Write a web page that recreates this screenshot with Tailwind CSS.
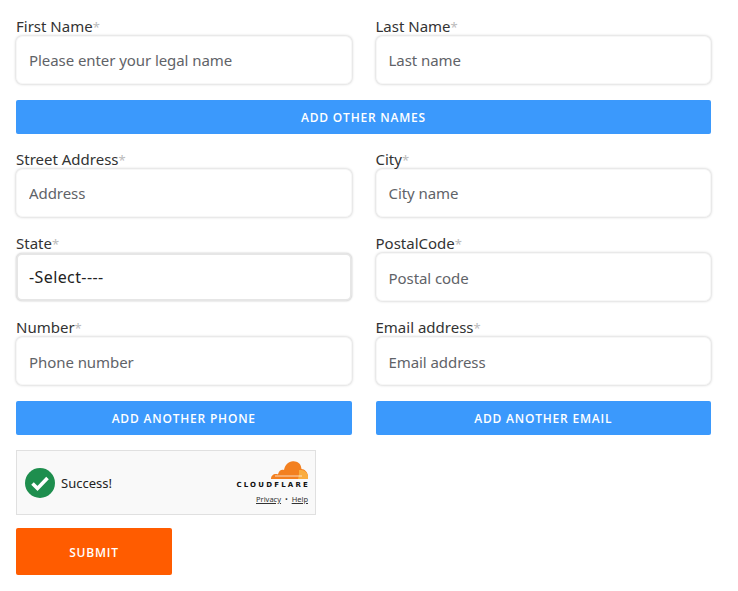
<!DOCTYPE html>
<html lang="en">
<head>
  <meta charset="UTF-8" />
  <meta name="viewport" content="width=device-width, initial-scale=1.0" />
  <title>Contact Form</title>
  <script src="https://cdn.jsdelivr.net/npm/@tailwindcss/browser@4"></script>
</head>
<body class="bg-white font-['Noto_Sans',sans-serif]">
  <form class="w-[738px] h-[591px] overflow-hidden pl-4 pr-[27px] pt-4">

    <!-- Names -->
    <div class="grid grid-cols-2 gap-x-6">
      <div>
        <label class="block h-5 text-[15px] leading-5 text-[#333]">First Name<span class="text-[#bbb] text-[13px]">*</span></label>
        <input placeholder="Please enter your legal name" class="w-full h-12 px-3 bg-white rounded-md border border-[#f7f7f7] shadow-[0_0_3px_rgba(0,0,0,0.25)] text-[15px] tracking-[-0.07px] text-[#333] placeholder:text-[#5f6368] outline-none" />
      </div>
      <div>
        <label class="block h-5 text-[15px] leading-5 text-[#333]">Last Name<span class="text-[#bbb] text-[13px]">*</span></label>
        <input placeholder="Last name" class="w-full h-12 px-3 bg-white rounded-md border border-[#f7f7f7] shadow-[0_0_3px_rgba(0,0,0,0.25)] text-[15px] tracking-[-0.07px] text-[#333] placeholder:text-[#5f6368] outline-none" />
      </div>
    </div>
    <button type="button" class="block w-full h-[34px] mt-4 pt-px bg-[#3b99fc] rounded-[2px] text-white text-xs font-semibold tracking-[0.8px] font-['Open_Sans',sans-serif]">ADD OTHER NAMES</button>

    <!-- Address -->
    <div class="grid grid-cols-2 gap-x-6 gap-y-4 mt-[15px]">
      <div>
        <label class="block h-5 text-[15px] leading-5 text-[#333]">Street Address<span class="text-[#bbb] text-[13px]">*</span></label>
        <input placeholder="Address" class="w-full h-12 px-3 bg-white rounded-md border border-[#f7f7f7] shadow-[0_0_3px_rgba(0,0,0,0.25)] text-[15px] tracking-[-0.07px] text-[#333] placeholder:text-[#5f6368] outline-none" />
      </div>
      <div>
        <label class="block h-5 text-[15px] leading-5 text-[#333]">City<span class="text-[#bbb] text-[13px]">*</span></label>
        <input placeholder="City name" class="w-full h-12 px-3 bg-white rounded-md border border-[#f7f7f7] shadow-[0_0_3px_rgba(0,0,0,0.25)] text-[15px] tracking-[-0.07px] text-[#333] placeholder:text-[#5f6368] outline-none" />
      </div>
      <div>
        <label class="block h-5 text-[15px] leading-5 text-[#333]">State<span class="text-[#bbb] text-[13px]">*</span></label>
        <div class="flex items-center w-full h-12 pl-[11px] bg-white rounded-md border-2 border-[#e6e6e6] shadow-[0_0_2px_rgba(0,0,0,0.25)] text-base tracking-[0.4px] text-[#222]">-Select----</div>
      </div>
      <div>
        <label class="block h-5 text-[15px] leading-5 text-[#333]">PostalCode<span class="text-[#bbb] text-[13px]">*</span></label>
        <input placeholder="Postal code" class="w-full h-12 px-3 pt-px bg-white rounded-md border border-[#f7f7f7] shadow-[0_0_3px_rgba(0,0,0,0.25)] text-[15px] tracking-[-0.07px] text-[#333] placeholder:text-[#5f6368] outline-none" />
      </div>
      <div>
        <label class="block h-5 text-[15px] leading-5 text-[#333]">Number<span class="text-[#bbb] text-[13px]">*</span></label>
        <input placeholder="Phone number" class="w-full h-12 px-3 pt-px bg-white rounded-md border border-[#f7f7f7] shadow-[0_0_3px_rgba(0,0,0,0.25)] text-[15px] tracking-[-0.07px] text-[#333] placeholder:text-[#5f6368] outline-none" />
      </div>
      <div>
        <label class="block h-5 text-[15px] leading-5 text-[#333]">Email address<span class="text-[#bbb] text-[13px]">*</span></label>
        <input placeholder="Email address" class="w-full h-12 px-3 pt-px bg-white rounded-md border border-[#f7f7f7] shadow-[0_0_3px_rgba(0,0,0,0.25)] text-[15px] tracking-[-0.07px] text-[#333] placeholder:text-[#5f6368] outline-none" />
      </div>
      <button type="button" class="h-[34px] pt-px bg-[#3b99fc] rounded-[2px] text-white text-xs font-semibold tracking-[0.8px] font-['Open_Sans',sans-serif]">ADD ANOTHER PHONE</button>
      <button type="button" class="h-[34px] pt-px bg-[#3b99fc] rounded-[2px] text-white text-xs font-semibold tracking-[0.8px] font-['Open_Sans',sans-serif]">ADD ANOTHER EMAIL</button>
    </div>

    <!-- Captcha widget -->
    <div class="flex items-center justify-between w-[300px] h-[65px] mt-[15px] pl-2 pr-[7px] bg-[#f9f9f9] border border-[#e0e0e0]">
      <div class="flex items-center gap-[6px]">
        <svg class="w-[30px] h-[30px]" viewBox="0 0 30 30">
          <circle cx="15" cy="15" r="15" fill="#1e8e4e"></circle>
          <path d="M7.5 15.500l5 5L22.500 10" fill="none" stroke="#fff" stroke-width="3.600"></path>
        </svg>
        <span class="pt-[2px] text-[13px] text-[#232323]">Success!</span>
      </div>
      <div class="flex flex-col items-end">
        <svg class="w-[37px] h-[18px]" viewBox="0 0 37 18">
          <path d="M0 18c0-3 2-5 5-5 1 0 2 .3 2 .3C8 9 11 8 13 9c1-6 6-10 11-8.500 4 .6 6 3 6.500 7.500 3 0 6.500 3 6.500 8v2z" fill="#f38020"></path>
          <path d="M27 18c1-3 1-6 1-9h2.500c3 0 6.500 3 6.500 7v2z" fill="#faad3f"></path>
          <path d="M4 15h27" stroke="#fff" stroke-width="0.7"></path>
        </svg>
        <span class="mt-[2px] text-[7px] leading-[8px] font-bold tracking-[2.2px] mr-[-2px] text-[#111] font-['DejaVu_Sans',sans-serif]">CLOUDFLARE</span>
        <span class="mt-[5px] text-[7.5px] leading-[10px] text-[#333]"><span class="underline">Privacy</span> &nbsp;&bull;&nbsp; <span class="underline">Help</span></span>
      </div>
    </div>

    <button type="submit" class="block w-[156px] h-[47px] mt-[13px] pt-[2px] bg-[#ff5c00] rounded-[2px] text-white text-xs font-semibold tracking-[0.8px] font-['Open_Sans',sans-serif]">SUBMIT</button>
  </form>
</body>
</html>
